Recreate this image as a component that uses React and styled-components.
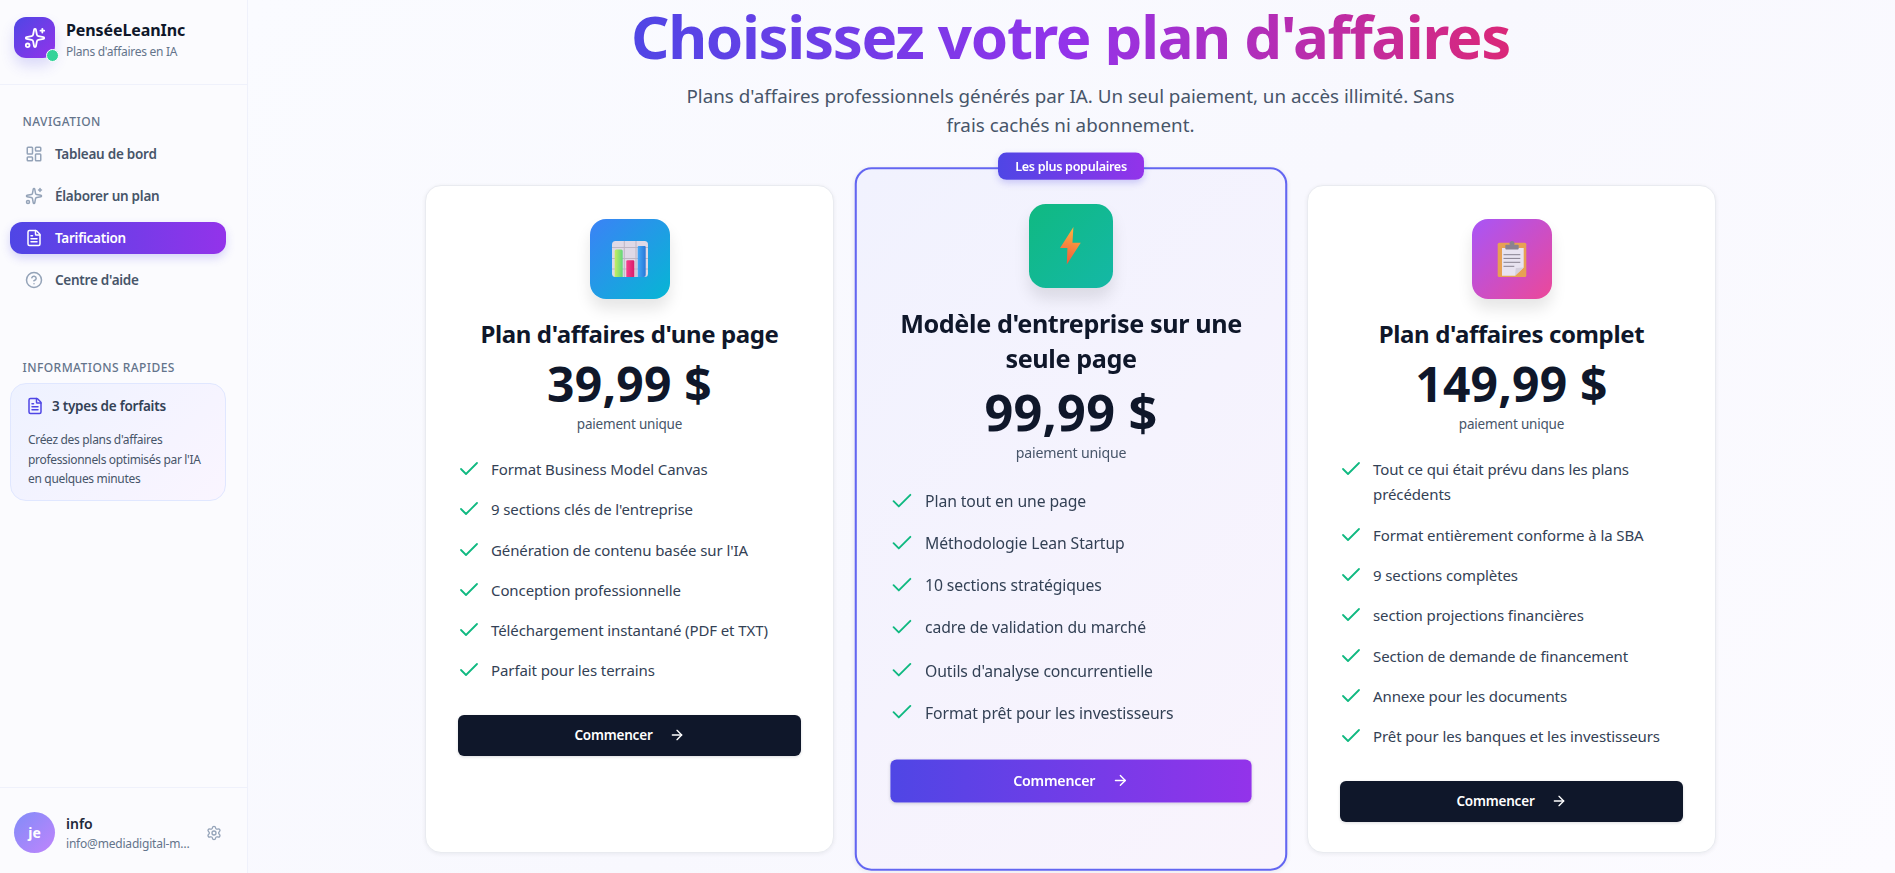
import React from 'react';
import styled, { createGlobalStyle } from 'styled-components';
import { LayoutDashboard, Sparkles, FileText, CircleHelp, Settings, Check, ArrowRight } from 'lucide-react';

const Global = createGlobalStyle`
  html, body { margin: 0; padding: 0; height: 100%; overflow: hidden; }
  body { font-family: "Noto Sans", "Open Sans", sans-serif; color: #0f172a; }
  * { box-sizing: border-box; }
`;

const Shell = styled.div`display: flex; width: 1895px; height: 873px; overflow: hidden;`;

const Sidebar = styled.aside`
  width: 248px; flex: none; height: 873px; display: flex; flex-direction: column;
  background: #fbfbfe; border-right: 1px solid #eff1fb;
`;
const Brand = styled.div`
  height: 85px; flex: none; display: flex; gap: 11px; padding: 17px 14px 0; border-bottom: 1px solid #eff1fb;
`;
const Logo = styled.div`
  position: relative; width: 41px; height: 41px; border-radius: 12px; flex: none;
  display: flex; align-items: center; justify-content: center; color: #fff;
  background: linear-gradient(135deg, #4f46e5, #9333ea);
  box-shadow: 0 8px 14px rgba(79, 70, 229, .18);
`;
const Dot = styled.span`
  position: absolute; right: -4px; bottom: -4px; width: 13px; height: 13px; border-radius: 50%;
  background: #34d399; border: 1.5px solid #fff;
`;
const BrandText = styled.div`display: flex; flex-direction: column; padding-top: 1px;`;
const BrandName = styled.div`font-size: 16px; font-weight: 700; line-height: 24px; color: #0f172a; letter-spacing: -.1px;`;
const BrandSub = styled.div`font-size: 12px; line-height: 18px; margin-top: 1px; color: #64748b; letter-spacing: -.27px;`;

const Section = styled.div`padding: ${p => p.$pt}px 21px 0 10px;`;
const Label = styled.div`
  font-size: 12px; font-weight: 500; line-height: 16px; color: #64748b; padding-left: 12.5px;
  letter-spacing: .45px; text-transform: uppercase;
`;
const NavList = styled.nav`display: flex; flex-direction: column; gap: 10px; margin-top: 8px;`;
const NavItem = styled.a`
  height: 32px; display: flex; align-items: center; gap: 12px; padding-left: 15px; border-radius: 12px;
  font-size: 13.5px; font-weight: 600; letter-spacing: -.25px;
  color: ${p => p.$active ? '#fff' : '#475569'};
  background: ${p => p.$active ? 'linear-gradient(90deg, #4f46e5, #9333ea)' : 'transparent'};
  box-shadow: ${p => p.$active ? '0 4px 10px rgba(79,70,229,.22)' : 'none'};
  svg { color: ${p => p.$active ? '#fff' : '#94a3b8'}; flex: none; }
`;
const InfoCard = styled.div`
  margin-top: 7px; height: 118px; border-radius: 16px; padding: 12px 17px;
  border: 1px solid #e0e7ff; background: linear-gradient(135deg, #eef2ff, #faf5ff);
`;
const InfoTitle = styled.div`
  display: flex; align-items: center; gap: 8px; margin-left: -2px; height: 20px;
  font-size: 13.5px; font-weight: 600; color: #334155; letter-spacing: -.25px;
  svg { color: #4f46e5; flex: none; }
`;
const InfoText = styled.p`
  margin: 14px 0 0; font-size: 12px; line-height: 19.5px; color: #475569; letter-spacing: -.32px;
`;
const Footer = styled.div`
  margin-top: auto; height: 86px; flex: none; border-top: 1px solid #eff1fb;
  padding: 24px 25px 0 14px; display: flex; gap: 11px;
`;
const Avatar = styled.div`
  width: 41px; height: 41px; border-radius: 50%; flex: none; color: #fff; font-size: 14px; font-weight: 700;
  display: flex; align-items: center; justify-content: center;
  background: linear-gradient(135deg, #818cf8, #c084fc);
`;
const UserText = styled.div`flex: 1; min-width: 0; display: flex; flex-direction: column;`;
const UserName = styled.div`font-size: 14px; font-weight: 600; line-height: 22px; margin-top: 1px; color: #1e293b;`;
const UserMail = styled.div`
  font-size: 12px; line-height: 18px; color: #64748b; letter-spacing: -.2px; width: 128px;
  white-space: nowrap; overflow: hidden; text-overflow: ellipsis;
`;
const Gear = styled.div`flex: none; color: #94a3b8; padding-top: 12px;`;

const Main = styled.main`
  flex: 1; min-width: 0; height: 873px; overflow: hidden; padding: 8px 2px 0 0;
  background: linear-gradient(135deg, #fafbff, #f8f8fe 50%, #fcfbff);
`;
const Title = styled.h1`
  margin: 0 auto; text-align: center; font-size: 60px; line-height: 57px; font-weight: 700; letter-spacing: -1.35px;
  width: max-content; padding: 0 4px;
  background: linear-gradient(90deg, #4f46e5, #9333ea 50%, #db2777);
  -webkit-background-clip: text; background-clip: text; color: transparent;
`;
const Sub = styled.p`
  width: 780px; margin: 17px auto 46px; text-align: center; font-size: 18.8px; line-height: 28.5px; color: #475569;
`;
const Grid = styled.div`
  width: 1291px; margin: 0 auto; display: grid; grid-template-columns: repeat(3, 1fr); gap: 32px; height: 668px;
`;
const Card = styled.article`
  position: relative; height: ${p => p.$featured ? 670 : 668}px; padding: 33px 32px 32px; border-radius: 16px;
  display: flex; flex-direction: column;
  margin: ${p => p.$featured ? '-1px -1.5px 0' : '0'};
  background: ${p => p.$featured ? 'linear-gradient(135deg, #f1f2fe, #f9f4fd)' : '#fff'};
  border: ${p => p.$featured ? '2px solid #6366f1' : '1.5px solid #e9ebf0'};
  box-shadow: 0 1px 4px rgba(15, 23, 42, .07);
  transform: ${p => p.$featured ? 'scale(1.05)' : 'none'};
  z-index: ${p => p.$featured ? 1 : 0};
`;
const Badge = styled.div`
  position: absolute; top: -16px; left: 50%; transform: translateX(-50%); width: 139px; height: 26px;
  border-radius: 8px; display: flex; align-items: center; justify-content: center; white-space: nowrap;
  font-size: 12px; font-weight: 600; color: #fff; letter-spacing: -.3px;
  background: linear-gradient(90deg, #4f46e5, #9333ea);
  box-shadow: 0 3px 7px rgba(79,70,229,.25);
`;
const IconBox = styled.div`
  width: 80px; height: 80px; flex: none; border-radius: 16px; margin: 0 auto ${p => p.$featured ? 17 : 18}px;
  display: flex; align-items: center; justify-content: center;
  background: linear-gradient(135deg, ${p => p.$from}, ${p => p.$to});
  box-shadow: 0 10px 15px rgba(0, 0, 0, .1);
`;
const PlanName = styled.h3`
  margin: 0; text-align: center; font-size: 24px; line-height: 33px; font-weight: 700; color: #0f172a; letter-spacing: -.38px;
`;
const Price = styled.div`
  text-align: center; font-size: 48px; line-height: 60px; font-weight: 700; color: #0f172a;
  margin-top: ${p => p.$featured ? 5 : 4}px; letter-spacing: .2px;
`;
const Once = styled.div`
  text-align: center; font-size: 13.5px; line-height: 20px; color: #475569; letter-spacing: -.2px;
  margin-top: ${p => p.$featured ? -1.5 : 0}px;
`;
const Features = styled.ul`
  list-style: none; padding: 0; display: flex; flex-direction: column; gap: 14.9px;
  margin: ${p => p.$featured ? '24px 0 31.5px' : '23px 0 31px'};
`;
const Feature = styled.li`
  display: flex; gap: 8px; font-size: 15px; line-height: 25.4px; color: #334155; letter-spacing: -.1px;
  svg { color: #10b981; flex: none; margin-left: -1px; margin-right: 2px; }
`;
const Cta = styled.button`
  width: 100%; height: 41px; border: 0; border-radius: 6px; flex: none; display: flex; align-items: center; justify-content: center; gap: 16px;
  font-family: inherit; font-size: 13.5px; font-weight: 600; color: #fff; letter-spacing: -.2px;
  background: ${p => p.$featured ? 'linear-gradient(90deg, #4f46e5, #9333ea)' : '#0f172a'};
  box-shadow: 0 1px 3px rgba(15,23,42,.15);
`;

const ChartEmoji = () => (
  <svg width="36" height="36" viewBox="0 0 36 36">
    <defs>
      <linearGradient id="gBar" x1="0" y1="0" x2="1" y2="0"><stop offset="0" stopColor="#c4ee62" /><stop offset="1" stopColor="#62d67c" /></linearGradient>
      <linearGradient id="pBar" x1="0" y1="0" x2="1" y2="0"><stop offset="0" stopColor="#f63f8c" /><stop offset="1" stopColor="#d91d6b" /></linearGradient>
      <linearGradient id="bBar" x1="0" y1="0" x2="1" y2="0"><stop offset="0" stopColor="#42a8f8" /><stop offset="1" stopColor="#2a78d8" /></linearGradient>
    </defs>
    <rect width="36" height="36" rx="3.5" fill="#dfd9e6" />
    <path d="M0 6.5H36M0 17.5H36M0 28H36M12.3 0V36M24 0V36" stroke="#bdb6c4" strokeWidth="1" />
    <path d="M2.7 10a1.5 1.5 0 0 1 1.5-1.5h5a1.5 1.5 0 0 1 1.5 1.5V36h-8z" fill="url(#gBar)" />
    <path d="M14.3 20.5a1.2 1.2 0 0 1 1.2-1.2h5.600a1.2 1.2 0 0 1 1.2 1.2V36h-8z" fill="url(#pBar)" />
    <path d="M25.700 6a1 1 0 0 1 1-1h6a1 1 0 0 1 1 1V34a2 2 0 0 1-2 2h-6z" fill="url(#bBar)" />
  </svg>
);
const BoltEmoji = () => (
  <svg width="36" height="36" viewBox="0 0 36 36">
    <defs>
      <linearGradient id="bolt" x1="0.6" y1="0" x2="0.4" y2="1"><stop offset="0" stopColor="#ffb340" /><stop offset="1" stopColor="#ef5a3c" /></linearGradient>
    </defs>
    <path d="M20.300 0 7.600 20H14.600L14 35.500 27.300 15H19.400Z" fill="url(#bolt)" />
  </svg>
);
const ClipboardEmoji = () => (
  <svg width="36" height="36" viewBox="0 0 36 36">
    <rect x="3.700" y="1.700" width="28.600" height="34.300" rx="1.500" fill="#e7a153" />
    <path d="M8 7H29.700V26.500L21 34.700H8Z" fill="#e8e3f0" />
    <path d="M21 34.700 21.800 27 29.700 26.500Z" fill="#d5cfdd" />
    <circle cx="18" cy="2.500" r="2.500" fill="#8a8290" />
    <rect x="11.300" y="3.700" width="13.400" height="4.800" rx="1" fill="#8a8290" />
    <path d="M9.500 13.700H26.300M9.500 17.400H26.300M9.500 21.300H26.300M9.500 25.300H20.300" stroke="#86808f" strokeWidth="1" />
  </svg>
);

const plans = [
  {
    name: "Plan d'affaires d'une page", price: '39,99 $', from: '#3b82f6', to: '#06b6d4', art: <ChartEmoji />,
    items: ['Format Business Model Canvas', "9 sections clés de l'entreprise", "Génération de contenu basée sur l'IA", 'Conception professionnelle', 'Téléchargement instantané (PDF et TXT)', 'Parfait pour les terrains'],
  },
  {
    name: "Modèle d'entreprise sur une seule page", price: '99,99 $', from: '#10b981', to: '#14b8a6', art: <BoltEmoji />, featured: true,
    items: ['Plan tout en une page', 'Méthodologie Lean Startup', '10 sections stratégiques', 'cadre de validation du marché', "Outils d'analyse concurrentielle", 'Format prêt pour les investisseurs'],
  },
  {
    name: "Plan d'affaires complet", price: '149,99 $', from: '#a855f7', to: '#ec4899', art: <ClipboardEmoji />,
    items: ['Tout ce qui était prévu dans les plans précédents', 'Format entièrement conforme à la SBA', '9 sections complètes', 'section projections financières', 'Section de demande de financement', 'Annexe pour les documents', 'Prêt pour les banques et les investisseurs'],
  },
];

export default function App() {
  return (
    <Shell>
      <Global />
      <Sidebar>
        <Brand>
          <Logo><Sparkles size={22} /><Dot /></Logo>
          <BrandText>
            <BrandName>PenséeLeanInc</BrandName>
            <BrandSub>Plans d'affaires en IA</BrandSub>
          </BrandText>
        </Brand>
        <Section $pt={29}>
          <Label>Navigation</Label>
          <NavList>
            <NavItem><LayoutDashboard size={18} />Tableau de bord</NavItem>
            <NavItem><Sparkles size={18} />Élaborer un plan</NavItem>
            <NavItem $active><FileText size={18} />Tarification</NavItem>
            <NavItem><CircleHelp size={18} />Centre d'aide</NavItem>
          </NavList>
        </Section>
        <Section $pt={64}>
          <Label>Informations rapides</Label>
          <InfoCard>
            <InfoTitle><FileText size={18} />3 types de forfaits</InfoTitle>
            <InfoText>Créez des plans d'affaires professionnels optimisés par l'IA en quelques minutes</InfoText>
          </InfoCard>
        </Section>
        <Footer>
          <Avatar>je</Avatar>
          <UserText>
            <UserName>info</UserName>
            <UserMail>info@mediadigital-marketing.com</UserMail>
          </UserText>
          <Gear><Settings size={16} /></Gear>
        </Footer>
      </Sidebar>
      <Main>
        <Title>Choisissez votre plan d'affaires</Title>
        <Sub>Plans d'affaires professionnels générés par IA. Un seul paiement, un accès illimité. Sans frais cachés ni abonnement.</Sub>
        <Grid>
          {plans.map(p => (
            <Card key={p.name} $featured={p.featured}>
              {p.featured && <Badge>Les plus populaires</Badge>}
              <IconBox $from={p.from} $to={p.to} $featured={p.featured}>{p.art}</IconBox>
              <PlanName>{p.name}</PlanName>
              <Price $featured={p.featured}>{p.price}</Price>
              <Once $featured={p.featured}>paiement unique</Once>
              <Features $featured={p.featured}>
                {p.items.map(i => <Feature key={i}><Check size={24} strokeWidth={1.8} />{i}</Feature>)}
              </Features>
              <Cta $featured={p.featured}>Commencer<ArrowRight size={16} /></Cta>
            </Card>
          ))}
        </Grid>
      </Main>
    </Shell>
  );
}
